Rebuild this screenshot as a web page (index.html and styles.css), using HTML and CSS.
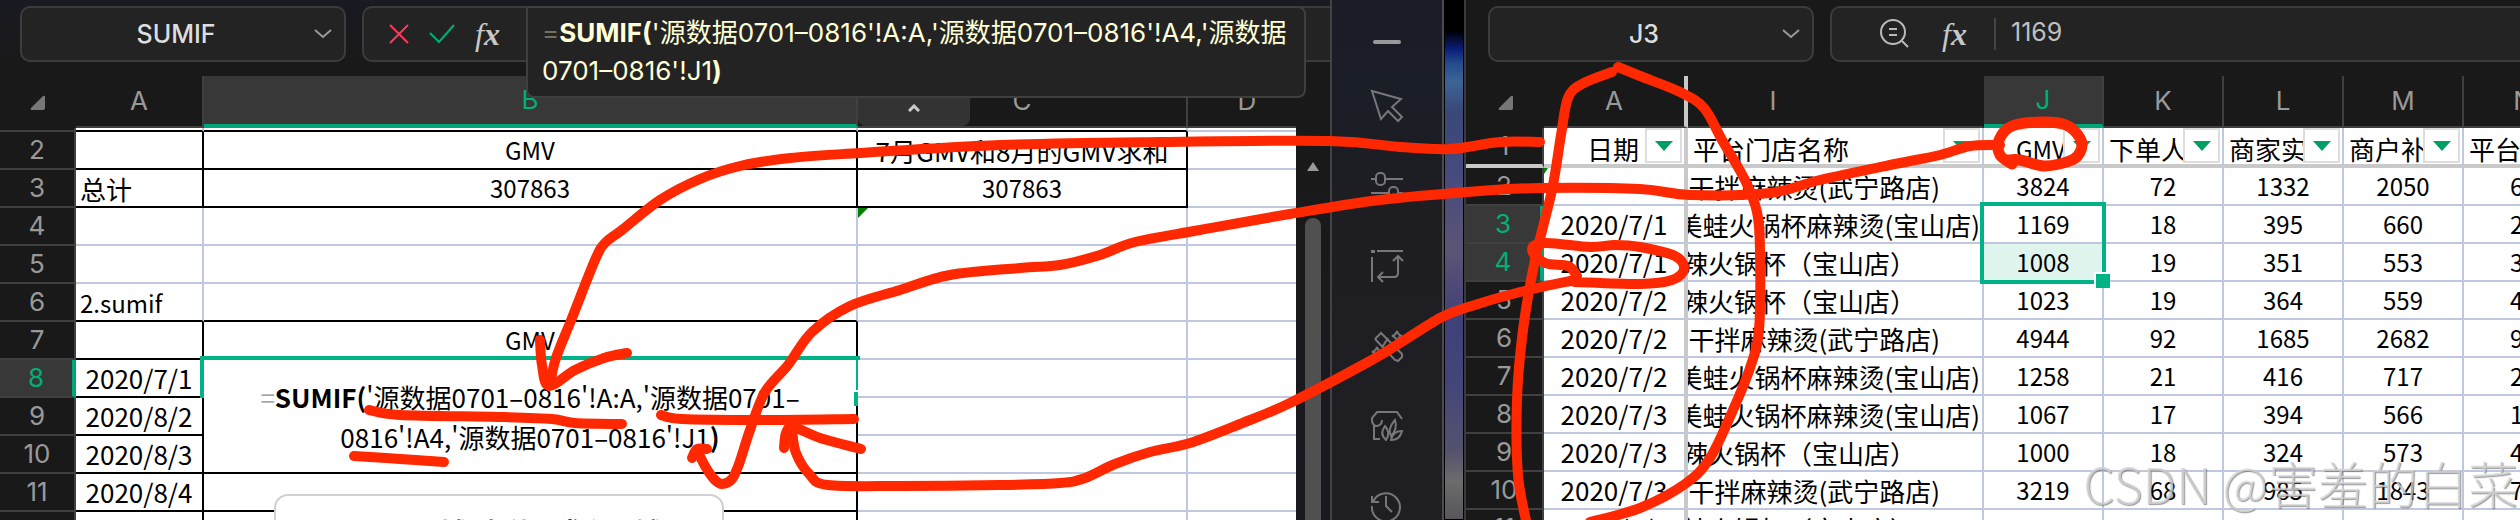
FILE: index.html
```html
<!DOCTYPE html>
<html lang="zh-CN">
<head>
<meta charset="utf-8">
<title>SUMIF</title>
<link rel="stylesheet" href="styles.css">
</head>
<body>
<main class="desktop">
  <section class="window window-left" aria-label="汇总表">
    <div class="workbook">
      <div class="bar">
        <div class="box name-box">
          <input class="name-input" aria-label="名称框" value="SUMIF">
          <button class="icon-button" aria-label="展开名称"><svg class="chevron" viewBox="0 0 18 10"><path d="M1 1l8 7 8-7"/></svg></button>
        </div>
        <div class="box formula-box">
          <button class="icon-button" aria-label="取消"><svg class="cancel" viewBox="0 0 20 20"><path d="M1 1l18 18M19 1L1 19"/></svg></button>
          <button class="icon-button" aria-label="确认"><svg class="accept" viewBox="0 0 26 20"><path d="M1 9l9 9L25 1"/></svg></button>
          <button class="fx" aria-label="插入函数">f<b>x</b></button>
        </div>
        <div class="formula-editor" contenteditable="true" role="textbox" aria-label="编辑栏" spellcheck="false"><span class="dim">=</span><b>SUMIF(</b>'源数据0701–0816'!A:A,'源数据0701–0816'!A4,'源数据<br>0701–0816'!J1<b>)</b></div>
      </div>
      <div class="sheet-area">
        <div class="sheet-view">
          <table class="sheet sheet-left">
            <colgroup><col class="w-index"><col class="w-a"><col class="w-b"><col class="w-c"><col class="w-d"></colgroup>
            <thead><tr><th class="corner"><svg viewBox="0 0 16 16"><path d="M13 1q2-1 2 1v11q0 2-2 2H2q-2 0-1-2z"/></svg></th><th>A</th><th class="active">B</th><th class="tabbed">C<button class="collapse" aria-label="收起编辑栏"><svg viewBox="0 0 12 8"><path d="M1 7l5-5 5 5"/></svg></button></th><th>D</th></tr></thead>
            <tbody>
              <tr class="sliver"><th></th><td class="k-bottom"></td><td class="k-bottom"></td><td class="k-bottom"></td><td></td></tr>
              <tr><th>2</th><td class="k"></td><td class="k num">GMV</td><td class="k mid">7月GMV和8月的GMV求和</td><td></td></tr>
              <tr><th>3</th><td class="k">总计</td><td class="k num">307863</td><td class="k num">307863</td><td></td></tr>
              <tr><th>4</th><td></td><td></td><td class="flag"></td><td></td></tr>
              <tr><th>5</th><td></td><td></td><td></td><td></td></tr>
              <tr><th>6</th><td class="k-bottom small">2.sumif</td><td class="k-bottom"></td><td></td><td></td></tr>
              <tr><th>7</th><td class="k"></td><td class="k num">GMV</td><td></td><td></td></tr>
              <tr><th class="active">8</th><td class="k date">2020/7/1</td><td class="k mid editing" rowspan="3"><span class="dim">=</span><b>SUMIF(</b>'源数据0701–0816'!A:A,'源数据0701–<br>0816'!A4,'源数据0701–0816'!J1<b>)</b><span class="cell-focus"></span></td><td></td><td></td></tr>
              <tr><th>9</th><td class="k date">2020/8/2</td><td></td><td></td></tr>
              <tr><th>10</th><td class="k date">2020/8/3</td><td></td><td></td></tr>
              <tr><th>11</th><td class="k date">2020/8/4</td><td class="k hint-cell"><div class="hint">SUMIF (区域, 条件, [求和区域])</div></td><td></td><td></td></tr>
              <tr><th>12</th><td class="k"></td><td class="k"></td><td></td><td></td></tr>
            </tbody>
          </table>
        </div>
        <div class="scroll-track"><span class="scroll-up"></span><span class="scroll-thumb"></span></div>
      </div>
    </div>
    <nav class="tools" aria-label="工具">
      <span class="minimize"></span>
      <button aria-label="选择"><svg viewBox="0 0 32 32"><path d="M1 1l29 8-9 8 10 10-4 4-10-10-7 8z"/></svg></button>
      <button aria-label="设置"><svg viewBox="0 0 32 32"><path d="M0 9h5M14 9h18M0 23h18M27 23h5"/><rect x="5" y="3" width="9" height="12" rx="4"/><rect x="18" y="17" width="9" height="12" rx="4"/></svg></button>
      <button aria-label="转置"><svg viewBox="0 0 32 32"><path d="M6 1h26M1 7v25M27 7v16q0 4-4 4H7M22 11l5-5 5 5M12 22l-5 5 5 5"/><path class="solid" d="M0 0h4v3H0z"/></svg></button>
      <button aria-label="美化"><svg viewBox="0 0 32 32"><path d="M4 9l6-6 21 21v3l-4 4-3-1L4 9M12 16l5-8M26 1q1 4 5 5-4 1-5 5-1-4-5-5 4-1 5-5zM6 17q1 4 5 5-4 1-5 5-1-4-5-5 4-1 5-5z"/></svg></button>
      <button aria-label="护眼"><svg viewBox="0 0 32 32"><path d="M31 9l-5-7H6L1 8v3q1 5 5 5 5-1 5-6M3 16v13h6M14 16q-6 8 1 14 5-7-1-14zM24 10q-8 9-4 16 7-7 4-16zM31 21q-9 0-11 9 9 0 11-9z"/></svg></button>
      <button aria-label="历史"><svg viewBox="0 0 32 32"><path d="M1 6v6h7M2 12a14 14 0 1 1-1 4M15 6v10l6 6"/></svg></button>
    </nav>
  </section>

  <div class="wallpaper"></div>

  <section class="window window-right" aria-label="源数据">
    <div class="workbook">
      <div class="bar">
        <div class="box name-box">
          <input class="name-input" aria-label="名称框" value="J3">
          <button class="icon-button" aria-label="展开名称"><svg class="chevron" viewBox="0 0 18 10"><path d="M1 1l8 7 8-7"/></svg></button>
        </div>
        <div class="box formula-box source-formula">
          <button class="icon-button" aria-label="查找"><svg class="lens" viewBox="0 0 30 30"><circle cx="13" cy="13" r="12"/><path d="M9 10h8M9 16h8M22 22l6 6"/></svg></button>
          <button class="fx" aria-label="插入函数">f<b>x</b></button>
          <input class="formula-input" aria-label="编辑栏" value="1169">
        </div>
      </div>
      <table class="sheet sheet-right">
        <colgroup><col class="w-rindex"><col class="w-date"><col class="w-shop"><col class="w-n"><col class="w-n"><col class="w-n"><col class="w-n"><col class="w-n"></colgroup>
        <thead><tr><th class="corner"><svg viewBox="0 0 16 16"><path d="M13 1q2-1 2 1v11q0 2-2 2H2q-2 0-1-2z"/></svg></th><th class="frozen">A</th><th class="plain">I</th><th class="active">J</th><th>K</th><th>L</th><th>M</th><th>N</th></tr></thead>
        <tbody>
          <tr class="titles"><th>1</th><td class="frozen"><div class="title title-end"><span>日期</span><button class="filter" aria-label="筛选日期"></button></div></td><td><div class="title"><span>平台门店名称</span><button class="filter" aria-label="筛选门店"></button></div></td><td><div class="title title-gmv"><span>GMV</span><button class="filter" aria-label="筛选GMV"></button></div></td><td><div class="title"><span>下单人</span><button class="filter" aria-label="筛选下单人"></button></div></td><td><div class="title"><span>商家实</span><button class="filter" aria-label="筛选商家实收"></button></div></td><td><div class="title"><span>商户补</span><button class="filter" aria-label="筛选商户补贴"></button></div></td><td><div class="title"><span>平台</span></div></td></tr>
          <tr><th>2</th><td class="frozen flag"></td><td><div class="shop shop-medium">干拌麻辣烫(武宁路店)</div></td><td class="num">3824</td><td class="num">72</td><td class="num">1332</td><td class="num">2050</td><td class="num edge">6</td></tr>
          <tr><th class="active">3</th><td class="frozen date">2020/7/1</td><td><div class="shop shop-long">美蛙火锅杯麻辣烫(宝山店)</div></td><td class="num range">1169<span class="range-frame"></span></td><td class="num">18</td><td class="num">395</td><td class="num">660</td><td class="num edge">2</td></tr>
          <tr><th class="active">4</th><td class="frozen date">2020/7/1</td><td><div class="shop shop-short">辣火锅杯（宝山店）</div></td><td class="num selected">1008</td><td class="num">19</td><td class="num">351</td><td class="num">553</td><td class="num edge">3</td></tr>
          <tr><th>5</th><td class="frozen date">2020/7/2</td><td><div class="shop shop-short">辣火锅杯（宝山店）</div></td><td class="num">1023</td><td class="num">19</td><td class="num">364</td><td class="num">559</td><td class="num edge">4</td></tr>
          <tr><th>6</th><td class="frozen date">2020/7/2</td><td><div class="shop shop-medium">干拌麻辣烫(武宁路店)</div></td><td class="num">4944</td><td class="num">92</td><td class="num">1685</td><td class="num">2682</td><td class="num edge">9</td></tr>
          <tr><th>7</th><td class="frozen date">2020/7/2</td><td><div class="shop shop-long">美蛙火锅杯麻辣烫(宝山店)</div></td><td class="num">1258</td><td class="num">21</td><td class="num">416</td><td class="num">717</td><td class="num edge">2</td></tr>
          <tr><th>8</th><td class="frozen date">2020/7/3</td><td><div class="shop shop-long">美蛙火锅杯麻辣烫(宝山店)</div></td><td class="num">1067</td><td class="num">17</td><td class="num">394</td><td class="num">566</td><td class="num edge">1</td></tr>
          <tr><th>9</th><td class="frozen date">2020/7/3</td><td><div class="shop shop-short">辣火锅杯（宝山店）</div></td><td class="num">1000</td><td class="num">18</td><td class="num">324</td><td class="num">573</td><td class="num edge">4</td></tr>
          <tr><th>10</th><td class="frozen date">2020/7/3</td><td><div class="shop shop-medium">干拌麻辣烫(武宁路店)</div></td><td class="num">3219</td><td class="num">68</td><td class="num">985</td><td class="num">1843</td><td class="num edge">7</td></tr>
          <tr><th>11</th><td class="frozen date">2020/7/4</td><td><div class="shop shop-short">辣火锅杯（宝山店）</div></td><td class="num">1147</td><td class="num">18</td><td class="num">444</td><td class="num">560</td><td class="num edge">2</td></tr>
        </tbody>
      </table>
    </div>
  </section>

  <svg class="ink" viewBox="0 0 2520 520" width="2520" height="520" aria-hidden="true">
    <path data-points="550,384 556,358 572,318 595,260 605,243 622,230 660,200 700,179 740,166 790,158 860,153 1000,145 1160,142 1330,141 1400,147 1450,149 1500,142 1540,142"/>
    <path data-points="540,340 542,365 549,386 575,370 604,358 627,353"/>
    <path data-points="692,458 697,449 707,449"/>
    <path data-points="697,450 705,466 714,479 722,484 732,479 739,464 750,430 765,392 788,365 812,332 850,306 900,290 950,275 1020,268 1060,265 1100,255 1135,242 1200,230 1290,214 1380,200 1480,191 1540,188 1640,189 1690,195 1770,193 1820,180 1890,165 1940,155 1970,146 2000,145"/>
    <path data-points="784,448 786,433 793,427 820,438 861,449"/>
    <path data-points="792,430 796,453 810,475 828,485 900,486 1000,485 1060,483 1085,478 1115,464 1150,452 1190,443 1240,424 1290,403 1370,361 1400,343 1440,318 1465,308 1520,292 1575,280"/>
    <path data-points="1575,282 1640,284 1672,280 1684,269 1675,256 1640,247 1615,245 1590,247 1545,243 1532,250 1545,263 1568,266 1577,276"/>
    <path data-points="1612,72 1582,84 1568,98 1561,135 1552,190 1535,260 1523,330 1517,400 1518,475 1527,525"/>
    <path data-points="1618,67 1640,76 1680,92 1704,108 1722,140 1745,180 1757,212 1760,250 1759,330 1750,368 1733,410 1710,458 1685,484 1640,508 1590,522"/>
    <path class="thick" data-points="2012,164 2000,155 1999,140 2012,126 2042,122 2066,125 2080,138 2081,150 2072,160 2045,166 2020,160 2008,160"/>
    <path data-points="369,410 400,415 500,417 552,419 575,423 622,424"/>
    <path data-points="661,415 682,419 760,420 854,419"/>
    <path data-points="354,456 400,459 444,462"/>
  </svg>
  <div class="watermark">CSDN @害羞的白菜</div>
</main>
<script src="ink.js"></script>
</body>
</html>
```

FILE: styles.css
```css
* { box-sizing: border-box; }

body {
  margin: 0;
  overflow: hidden;
  background: #191919;
  color: #000;
  font-family: Inter, "Noto Sans CJK SC", sans-serif;
  font-size: 26px;
}

button {
  padding: 0;
  border: 0;
  background: none;
  color: inherit;
  font: inherit;
}

svg { fill: none; stroke: currentColor; stroke-width: 2; }

.desktop {
  position: relative;
  display: flex;
  height: 100vh;
  overflow: hidden;
}

.window { display: flex; color: #999; }
.window-left { flex: none; }
.window-right { flex: 1; min-width: 0; border-left: 2px solid #3a3a3a; }
.window-left .workbook { border-right: 2px solid #414247; background: linear-gradient(#191a22, #191919 76px, #191a20); }
.window-right .workbook { flex: 1; min-width: 0; overflow: hidden; background: #191919; }

.bar {
  position: relative;
  display: flex;
  gap: 16px;
  height: 76px;
  padding: 6px 0 14px 20px;
}
.window-right .bar { padding-left: 22px; }

.box {
  display: flex;
  align-items: center;
  border: 2px solid #3c3c3c;
  border-radius: 10px;
  background: #232323;
}
.name-box { flex: none; width: 326px; padding-right: 12px; }
.name-input {
  flex: 1;
  min-width: 0;
  height: 40px;
  padding: 0 0 0 16px;
  border: 0;
  background: none;
  color: #dedede;
  font: 500 25px Inter, sans-serif;
  text-align: center;
}
.icon-button { display: flex; }
.chevron { width: 18px; height: 10px; }
.formula-box {
  flex: 1;
  gap: 20px;
  padding-left: 25px;
  border-right: 0;
  border-radius: 10px 0 0 10px;
}
.cancel { width: 20px; height: 20px; color: #ff3860; }
.accept { width: 26px; height: 20px; color: #00b074; }
.fx {
  width: 28px;
  color: #c8c8c8;
  font: italic 32px/40px "Liberation Serif", serif;
  text-align: left;
}
.source-formula { padding-left: 48px; gap: 32px; }
.lens { width: 30px; height: 30px; color: #bbb; }
.formula-input {
  flex: 1;
  min-width: 0;
  height: 32px;
  margin-left: -8px;
  padding: 0 0 4px 15px;
  border: 0;
  border-left: 2px solid #444;
  background: none;
  color: #c0c0c0;
  font: 25px Inter, sans-serif;
}

.formula-editor {
  position: absolute;
  z-index: 3;
  top: 6px;
  left: 526px;
  width: 780px;
  height: 92px;
  padding: 6px 14px;
  border: 2px solid #3f3f3f;
  border-radius: 0 8px 8px 8px;
  background: #232323;
  color: #ffffd8;
  font-size: 26px;
  line-height: 38px;
  white-space: nowrap;
  outline: none;
}
.dim { opacity: 0.35; }

.sheet-area { display: flex; }
.sheet-view { width: 1296px; overflow: hidden; }

.sheet {
  table-layout: fixed;
  border-collapse: separate;
  border-spacing: 0;
}
.sheet-left { width: 1308px; }
.sheet-right { width: 1118px; }
.w-index { width: 76px; }
.w-a { width: 128px; }
.w-b { width: 654px; }
.w-c { width: 330px; }
.w-d { width: 120px; }
.w-rindex { width: 78px; }
.w-date { width: 144px; }
.w-shop { width: 296px; }
.w-n { width: 120px; }

.sheet th {
  height: 38px;
  padding: 0;
  border-right: 2px solid #404040;
  border-bottom: 2px solid #404040;
  background: #191919;
  color: #999;
  font-weight: 400;
  line-height: 32px;
}
.sheet thead th { height: 52px; }
.sheet thead .corner, .sheet thead .plain { border-right-color: #191919; }
.sheet thead .plain { padding-right: 124px; }
.sheet thead .corner { border-bottom-color: #191919; text-align: left; }
.corner svg { display: block; width: 16px; height: 16px; margin: 4px 0 0 30px; fill: #777; stroke: none; }
.sheet-right .corner svg { margin-left: 32px; }
.sheet .active { background: #383838; color: #00b074; }
.sheet thead .active { border-bottom: 4px solid #00a57a; }
.sheet tbody .active { border-right: 4px solid #00a57a; }

.sheet td {
  position: relative;
  height: 38px;
  padding: 2px 0 0 4px;
  border-right: 2px solid #bec9df;
  border-bottom: 2px solid #bec9df;
  background: #fff;
  color: #000;
  font: 26px/34px "Noto Sans CJK SC", sans-serif;
  white-space: nowrap;
}
.sheet .k { border-color: #000; }
.sheet .k-bottom { border-bottom-color: #000; }
.sheet .num { padding: 0; font-size: 24px; text-align: center; }
.sheet .mid { padding: 2px 0 0; text-align: center; }
.sheet .small { font-size: 24px; }
.sheet .date { padding: 0; text-align: center; }
.sheet .sliver th, .sheet .sliver td { height: 4px; padding-top: 0; line-height: 0; }

.sheet .tabbed { position: relative; }
.collapse {
  position: absolute;
  top: 16px;
  left: 0;
  display: flex;
  align-items: flex-end;
  justify-content: center;
  width: 112px;
  height: 34px;
  padding-bottom: 14px;
  border-radius: 0 0 8px 8px;
  background: #333;
  color: #ccc;
}
.collapse svg { width: 12px; height: 8px; stroke-width: 3; }

.flag::before {
  content: "";
  position: absolute;
  top: 0;
  left: 0;
  border-top: 10px solid #008000;
  border-right: 10px solid transparent;
}
.window-right .flag::before { border-top-width: 6px; border-right-width: 4px; }

.sheet .editing { line-height: 40px; }
.cell-focus {
  position: absolute;
  top: -4px;
  right: -4px;
  left: -4px;
  height: 44px;
  border: 4px solid #00b386;
  border-bottom: 0;
}
.cell-focus::after {
  content: "";
  position: absolute;
  right: -8px;
  bottom: -6px;
  width: 10px;
  height: 14px;
  border-top: 2px solid #fff;
  background: #00b386;
}
.hint {
  position: absolute;
  z-index: 2;
  top: 20px;
  left: 70px;
  width: 450px;
  height: 70px;
  padding-top: 18px;
  border: 2px solid #d0d0d0;
  border-radius: 14px;
  background: #fff;
  font-weight: 700;
  text-align: center;
}

.scroll-track {
  display: flex;
  flex-direction: column;
  align-items: center;
  width: 34px;
  padding-top: 86px;
}
.scroll-up {
  border: 6px solid transparent;
  border-top: 0;
  border-bottom: 9px solid #999;
}
.scroll-thumb {
  width: 16px;
  height: 400px;
  margin-top: 47px;
  border-radius: 8px;
  background: #505050;
}

.tools {
  display: flex;
  flex-direction: column;
  align-items: center;
  gap: 48px;
  width: 112px;
  padding-top: 40px;
  border-right: 2px solid #4b4b50;
  background: linear-gradient(#1a1c26, #1a1e26 80px, #1e1d22 220px, #1f1e21);
}
.minimize { flex: none; width: 28px; height: 4px; margin-bottom: -2px; border-radius: 2px; background: #999; }
.tools button { flex: none; height: 32px; color: #77777a; }
.tools svg { display: block; width: 32px; height: 32px; overflow: visible; }
.tools .solid { fill: currentColor; stroke: none; }

.wallpaper {
  flex: none;
  width: 20px;
  border: 1px solid #000;
  background: linear-gradient(#000 30px, #0a1d78 48px, #244a8c 62px, #3d6496 80px, #394879 110px, #454a7e 170px, #5c5475 250px, #404078 320px, #42457a 380px, #55526e 450px, #6e6b6c 480px, #58555c);
}

.sheet thead .frozen { border-right: 4px solid #c9c9c9; }
.sheet td.frozen { border-right: 4px solid #c9c9c9; }
.sheet .titles th, .sheet .titles td { height: 40px; padding-top: 0; border-bottom: 4px solid #c9c9c9; }
.title { display: flex; gap: 4px; height: 36px; padding-right: 2px; }
.title span { flex: 1; min-width: 0; padding-left: 1px; overflow: hidden; line-height: 42px; }
.title .filter { margin-left: -4px; }
.title-end span { padding-right: 6px; text-align: right; }
.title-gmv span { padding-left: 28px; font-size: 24px; }
.filter {
  display: flex;
  flex: none;
  align-items: center;
  justify-content: center;
  width: 37px;
  height: 35px;
  border: 2px solid #ddd;
  background: #fff;
}
.filter::before {
  content: "";
  border: 9px solid transparent;
  border-top: 10px solid #00a064;
  border-bottom: 0;
}
.shop { display: flex; justify-content: flex-end; margin-left: -4px; overflow: hidden; }
.shop-long { padding-right: 2px; }
.shop-medium { padding-right: 42px; }
.shop-short { padding-right: 66px; }
.sheet .edge { padding-left: 46px; text-align: left; }

.sheet .selected { background: #dff4ec; }
.range-frame {
  position: absolute;
  z-index: 1;
  top: -4px;
  right: -4px;
  left: -4px;
  height: 82px;
  border: 4px solid #00b386;
}
.range-frame::after {
  content: "";
  position: absolute;
  right: -8px;
  bottom: -8px;
  width: 14px;
  height: 14px;
  border: 2px solid #fff;
  border-right: 0;
  border-bottom: 0;
  background: #00b386;
}

.ink {
  position: absolute;
  z-index: 5;
  top: 0;
  left: 0;
  color: #ff2800;
  pointer-events: none;
}
.ink path { stroke-width: 10; stroke-linecap: round; stroke-linejoin: round; }
.ink .thick { stroke-width: 11; }

.watermark {
  position: absolute;
  z-index: 6;
  right: 2px;
  bottom: 8px;
  color: rgba(215, 215, 215, 0.75);
  font: 300 50px/60px "Noto Sans CJK SC", sans-serif;
  text-shadow: 1px 1px 1px rgba(90, 90, 90, 0.6);
  white-space: nowrap;
  pointer-events: none;
}
```

FILE: ink.js
```js
// Turns each list of pen points into a smooth curve through those points.
document.querySelectorAll('.ink path').forEach((path) => {
  const p = path.dataset.points.split(' ').map((pair) => pair.split(',').map(Number));
  let d = `M${p[0]}`;
  for (let i = 0; i < p.length - 1; i += 1) {
    const a = p[i - 1] || p[i];
    const b = p[i];
    const c = p[i + 1];
    const e = p[i + 2] || c;
    d += `C${b[0] + (c[0] - a[0]) / 6},${b[1] + (c[1] - a[1]) / 6} ${c[0] - (e[0] - b[0]) / 6},${c[1] - (e[1] - b[1]) / 6} ${c}`;
  }
  path.setAttribute('d', d);
});
```
